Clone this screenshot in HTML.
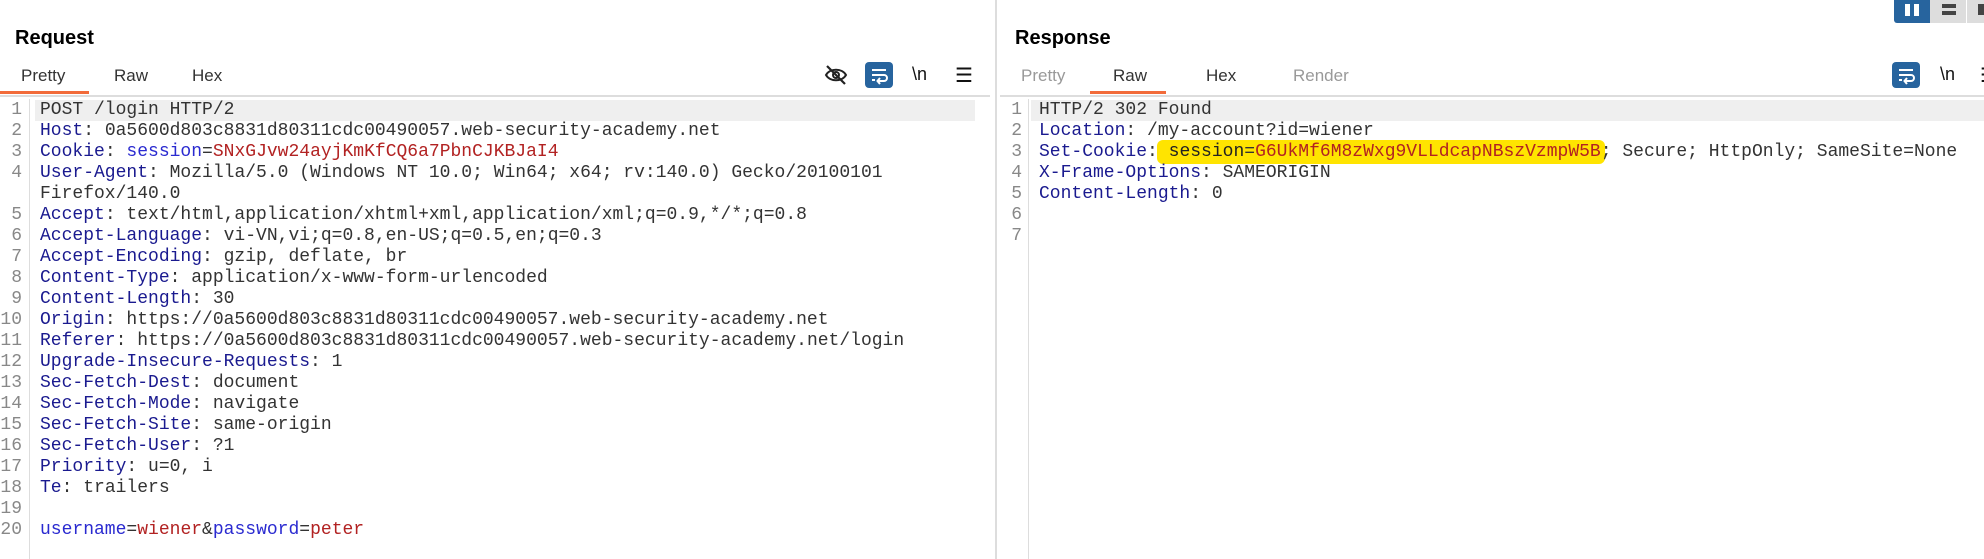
<!DOCTYPE html>
<html><head><meta charset="utf-8"><style>
body{margin:0;width:1984px;height:559px;background:#fff;position:relative;overflow:hidden;font-family:"Liberation Sans",sans-serif}
.a{position:absolute}
.title{font-weight:bold;font-size:20px;color:#000}
.tab{font-size:17px;color:#333}
.code{font-family:"Liberation Mono",monospace;font-size:18px;line-height:21px;white-space:pre;color:#333}
.ln{font-family:"Liberation Mono",monospace;font-size:18px;line-height:21px;color:#888;text-align:right;width:22px}
.k{color:#1a1a8f}.b{color:#2a2ad0}.r{color:#b22222}
.hl{background:#efefef}
</style></head><body>
<div class="a title" style="left:15px;top:27px">Request</div>
<div class="a tab" style="left:21px;top:66px">Pretty</div>
<div class="a tab" style="left:114px;top:66px">Raw</div>
<div class="a tab" style="left:192px;top:66px">Hex</div>
<div class="a" style="left:0;top:91px;width:89px;height:3px;background:#f26b3a"></div>
<div class="a" style="left:0;top:95px;width:990px;height:2px;background:#ddd"></div>
<svg class="a" style="left:824px;top:64px" width="24" height="22" viewBox="0 0 24 22"><path d="M2 11C6 4 18 4 22 11C18 18 6 18 2 11Z" fill="none" stroke="#222" stroke-width="2"/><circle cx="12" cy="11" r="3" fill="none" stroke="#222" stroke-width="2"/><path d="M3 2L21 20" stroke="#222" stroke-width="2.2"/></svg>
<div class="a" style="left:865px;top:62px;width:28px;height:26px;background:#27649e;border-radius:4px"></div>
<svg class="a" style="left:865px;top:62px" width="28" height="26"><path d="M7 8H21M7 13H19a3 3 0 0 1 0 6H13M7 18H10M15 16l-2.5 3 2.5 3" fill="none" stroke="#fff" stroke-width="2"/></svg>
<div class="a" style="left:912px;top:64px;font-size:18px;color:#111">\n</div>
<div class="a" style="left:955px;top:63px;font-size:20px;color:#111">☰</div>
<div class="a hl" style="left:35px;top:100px;width:940px;height:21px"></div>
<div class="a" style="left:29px;top:99px;width:1px;height:460px;background:#ddd"></div>
<div class="a ln" style="left:0;top:100px">1<br>2<br>3<br>4<br><br>5<br>6<br>7<br>8<br>9<br>10<br>11<br>12<br>13<br>14<br>15<br>16<br>17<br>18<br>19<br>20</div>
<div class="a code" style="left:40px;top:100px">POST /login HTTP/2
<span class="k">Host</span>: 0a5600d803c8831d80311cdc00490057.web-security-academy.net
<span class="k">Cookie</span>: <span class="b">session</span>=<span class="r">SNxGJvw24ayjKmKfCQ6a7PbnCJKBJaI4</span>
<span class="k">User-Agent</span>: Mozilla/5.0 (Windows NT 10.0; Win64; x64; rv:140.0) Gecko/20100101
Firefox/140.0
<span class="k">Accept</span>: text/html,application/xhtml+xml,application/xml;q=0.9,*/*;q=0.8
<span class="k">Accept-Language</span>: vi-VN,vi;q=0.8,en-US;q=0.5,en;q=0.3
<span class="k">Accept-Encoding</span>: gzip, deflate, br
<span class="k">Content-Type</span>: application/x-www-form-urlencoded
<span class="k">Content-Length</span>: 30
<span class="k">Origin</span>: https://0a5600d803c8831d80311cdc00490057.web-security-academy.net
<span class="k">Referer</span>: https://0a5600d803c8831d80311cdc00490057.web-security-academy.net/login
<span class="k">Upgrade-Insecure-Requests</span>: 1
<span class="k">Sec-Fetch-Dest</span>: document
<span class="k">Sec-Fetch-Mode</span>: navigate
<span class="k">Sec-Fetch-Site</span>: same-origin
<span class="k">Sec-Fetch-User</span>: ?1
<span class="k">Priority</span>: u=0, i
<span class="k">Te</span>: trailers

<span class="b">username</span>=<span class="r">wiener</span>&amp;<span class="b">password</span>=<span class="r">peter</span></div>

<div class="a" style="left:995px;top:0;width:2px;height:559px;background:#ddd"></div>

<div class="a" style="left:1894px;top:0;width:36px;height:23px;background:#27649e;border-radius:0 0 0 3px"></div>
<div class="a" style="left:1905px;top:4px;width:5px;height:12px;background:#fff"></div>
<div class="a" style="left:1914px;top:4px;width:5px;height:12px;background:#fff"></div>
<div class="a" style="left:1930px;top:0;width:36px;height:23px;background:#ddd"></div>
<div class="a" style="left:1942px;top:4px;width:14px;height:4px;background:#444"></div>
<div class="a" style="left:1942px;top:11px;width:14px;height:4px;background:#444"></div>
<div class="a" style="left:1967px;top:0;width:17px;height:23px;background:#ddd"></div>
<div class="a" style="left:1978px;top:4px;width:6px;height:11px;background:#444"></div>

<div class="a title" style="left:1015px;top:27px">Response</div>
<div class="a tab" style="left:1021px;top:66px;color:#999">Pretty</div>
<div class="a tab" style="left:1113px;top:66px">Raw</div>
<div class="a tab" style="left:1206px;top:66px">Hex</div>
<div class="a tab" style="left:1293px;top:66px;color:#999">Render</div>
<div class="a" style="left:1090px;top:91px;width:76px;height:3px;background:#f26b3a"></div>
<div class="a" style="left:1000px;top:95px;width:984px;height:2px;background:#ddd"></div>
<div class="a" style="left:1892px;top:62px;width:28px;height:26px;background:#27649e;border-radius:4px"></div>
<svg class="a" style="left:1892px;top:62px" width="28" height="26"><path d="M7 8H21M7 13H19a3 3 0 0 1 0 6H13M7 18H10M15 16l-2.5 3 2.5 3" fill="none" stroke="#fff" stroke-width="2"/></svg>
<div class="a" style="left:1940px;top:64px;font-size:18px;color:#111">\n</div>
<div class="a" style="left:1980px;top:63px;font-size:20px;color:#111">☰</div>
<div class="a hl" style="left:1031px;top:100px;width:953px;height:21px"></div>
<div class="a" style="left:1028px;top:99px;width:1px;height:460px;background:#ddd"></div>
<div class="a" style="left:1157px;top:140px;width:448px;height:24px;background:#ffe400;border-radius:6px"></div>
<div class="a ln" style="left:1000px;top:100px">1<br>2<br>3<br>4<br>5<br>6<br>7</div>
<div class="a code" style="left:1039px;top:100px">HTTP/2 302 Found
<span class="k">Location</span>: /my-account?id=wiener
<span class="k">Set-Cookie</span>: <span style="color:#222">session</span>=<span class="r">G6UkMf6M8zWxg9VLLdcapNBszVzmpW5B</span>; Secure; HttpOnly; SameSite=None
<span class="k">X-Frame-Options</span>: SAMEORIGIN
<span class="k">Content-Length</span>: 0
</div>
</body></html>
